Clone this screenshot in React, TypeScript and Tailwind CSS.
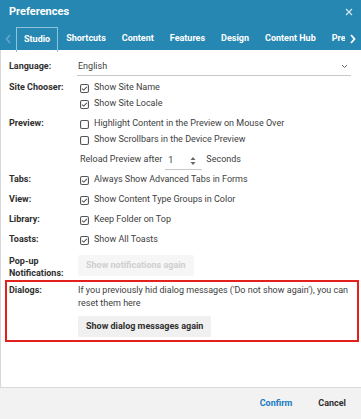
import React from "react";

const Check = ({ checked }: { checked: boolean }) => (
  <svg width="9" height="9" viewBox="0 0 9 9" className="shrink-0">
    <rect x="0.55" y="0.55" width="7.9" height="7.9" rx="1.5" fill="none" stroke="#555" strokeWidth="1.1" />
    {checked && <path d="M2.1 4.6 L3.8 6.1 L6.9 2.9" fill="none" stroke="#555" strokeWidth="1.1" />}
  </svg>
);

const CbRow = ({ checked, text }: { checked: boolean; text: string }) => (
  <div className="h-4 flex items-center pl-[2px] gap-[5px]">
    <Check checked={checked} />
    <span>{text}</span>
  </div>
);

const Row = ({ label, children, className = "" }: { label: React.ReactNode; children: React.ReactNode; className?: string }) => (
  <div className={"flex " + className}>
    <div className="w-[69px] shrink-0 font-bold text-[#2e2e2e] h-4 flex items-center">{label}</div>
    <div className="flex-1 flex flex-col">{children}</div>
  </div>
);

export default function App() {
  const tabs = ["Studio", "Shortcuts", "Content", "Features", "Design", "Content Hub", "Preferences"];
  return (
    <div className="w-[361px] h-[419px] overflow-hidden bg-white flex flex-col text-[9px] text-[#404040]" style={{ fontFamily: "Roboto, 'Liberation Sans', sans-serif" }}>
      <div className="bg-[#2687b2] text-white shrink-0">
        <div className="h-[24px] flex items-center justify-between pl-[9px] pr-[8px]">
          <span className="font-bold text-[11px]">Preferences</span>
          <svg width="8" height="8" viewBox="0 0 8 8"><path d="M1 1 L7 7 M7 1 L1 7" stroke="#d5e8f1" strokeWidth="1.2" /></svg>
        </div>
        <div className="h-[26px] flex items-start relative">
          <div className="w-[16px] h-[24px] mt-[3px] flex items-center justify-center">
            <svg width="6" height="10" viewBox="0 0 6 10"><path d="M5 1 L1.5 5 L5 9" fill="none" stroke="#5fa8c9" strokeWidth="1.6" /></svg>
          </div>
          <div className="w-[329px] overflow-hidden flex mt-[3px] h-[25px]">
            {tabs.map((t, i) => (
              <div key={t} className={"shrink-0 px-[7px] h-[24px] flex items-center font-bold whitespace-nowrap " + (i === 0 ? "border border-[#8ec3dc] border-b-0 h-[25px]" : "border border-transparent")}>{t}</div>
            ))}
          </div>
          <div className="w-[16px] h-[24px] mt-[3px] flex items-center justify-center">
            <svg width="6" height="10" viewBox="0 0 6 10"><path d="M1 1 L4.5 5 L1 9" fill="none" stroke="#fff" strokeWidth="1.8" /></svg>
          </div>
        </div>
      </div>
      <div className="flex-1 border-l border-[#d8d8d8] relative">
        <div className="pt-[7px] pl-[8px] pr-[10px]">
          <Row label="Language:" className="h-[20px] items-center">
            <div className="-ml-[1px] h-[17px] border-b border-[#c8c8c8] flex items-center justify-between pl-[1px] pr-[3px]">
              <span>English</span>
              <svg width="7" height="5" viewBox="0 0 7 5"><path d="M1 1 L3.5 3.5 L6 1" fill="none" stroke="#666" strokeWidth="1" /></svg>
            </div>
          </Row>
          <Row label="Site Chooser:" className="mt-[3px]">
            <CbRow checked text="Show Site Name" />
            <CbRow checked text="Show Site Locale" />
          </Row>
          <Row label="Preview:" className="mt-[4px]">
            <CbRow checked={false} text="Highlight Content in the Preview on Mouse Over" />
            <CbRow checked={false} text="Show Scrollbars in the Device Preview" />
            <div className="h-4 mt-[4px] flex items-center pl-[2px]">
              <span>Reload Preview after</span>
              <div className="ml-[3px] w-[37px] h-[17px] mt-[2px] border-b border-[#c8c8c8] flex items-center justify-between pl-[3px] pr-[6px]">
                <span>1</span>
                <svg width="6" height="10" viewBox="0 0 6 10"><path d="M0.5 4 L3 1 L5.5 4 Z M0.5 6 L3 9 L5.5 6 Z" fill="#666" /></svg>
              </div>
              <span className="ml-[4px]">Seconds</span>
            </div>
          </Row>
          <Row label="Tabs:" className="mt-[4px]">
            <CbRow checked text="Always Show Advanced Tabs in Forms" />
          </Row>
          <Row label="View:" className="mt-[4px]">
            <CbRow checked text="Show Content Type Groups in Color" />
          </Row>
          <Row label="Library:" className="mt-[4px]">
            <CbRow checked text="Keep Folder on Top" />
          </Row>
          <Row label="Toasts:" className="mt-[4px]">
            <CbRow checked text="Show All Toasts" />
          </Row>
          <div className="flex mt-[7px]">
            <div className="w-[69px] shrink-0 font-bold text-[#2e2e2e] leading-[12px]">Pop-up<br />Notifications:</div>
            <div className="flex-1">
              <div className="inline-flex h-[21px] items-center px-[8px] bg-[#f6f6f6] text-[#cfcfcf] font-bold rounded-[2px]">Show notifications again</div>
            </div>
          </div>
        </div>
        <div className="mt-[1px] ml-[4px] mr-[2px] border-2 border-[#e3201b] pl-[2px] pr-[4px] pt-[2px] pb-[3px] flex">
          <div className="w-[69px] shrink-0 font-bold text-[#2e2e2e] leading-[13px]">Dialogs:</div>
          <div className="flex-1">
            <div className="leading-[13px]">If you previously hid dialog messages ('Do not show again'), you can reset them here</div>
            <div className="mt-[6px] inline-flex h-[21px] items-center px-[8px] bg-[#f0f0f0] text-[#2e2e2e] font-bold rounded-[2px]">Show dialog messages again</div>
          </div>
        </div>
      </div>
      <div className="h-[32px] shrink-0 bg-[#f2f2f2] border-t border-[#d9d9d9] flex items-center justify-end pr-[15px] gap-[26px] font-bold">
        <span className="text-[#1b7bbf]">Confirm</span>
        <span className="text-[#2e2e2e]">Cancel</span>
      </div>
    </div>
  );
}
